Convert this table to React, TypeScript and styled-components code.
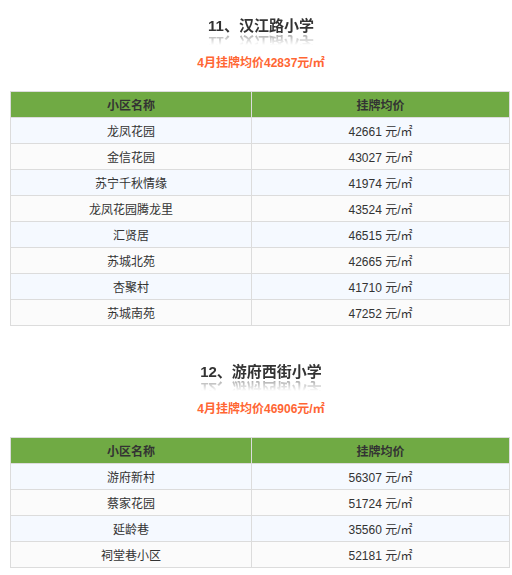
import React from "react";
import styled, { createGlobalStyle } from "styled-components";

const GlobalStyle = createGlobalStyle`
  body {
    margin: 0;
    background: #fff;
    font-family: "Liberation Sans", Arial, "Noto Sans CJK SC", sans-serif;
    color: #333;
  }
`;

type Row = { name: string; price: number };

const schools: { title: string; avg: number; rows: Row[] }[] = [
  {
    title: "11、汉江路小学",
    avg: 42837,
    rows: [
      { name: "龙凤花园", price: 42661 },
      { name: "金信花园", price: 43027 },
      { name: "苏宁千秋情缘", price: 41974 },
      { name: "龙凤花园腾龙里", price: 43524 },
      { name: "汇贤居", price: 46515 },
      { name: "苏城北苑", price: 42665 },
      { name: "杏聚村", price: 41710 },
      { name: "苏城南苑", price: 47252 },
    ],
  },
  {
    title: "12、游府西街小学",
    avg: 46906,
    rows: [
      { name: "游府新村", price: 56307 },
      { name: "蔡家花园", price: 51724 },
      { name: "延龄巷", price: 35560 },
      { name: "祠堂巷小区", price: 52181 },
    ],
  },
];

function App() {
  return (
    <>
      <GlobalStyle />
      <StyledPage>
        {schools.map(({ title, avg, rows }) => (
          <StyledSection key={title}>
            <StyledTitleWrap>
              <StyledTitle>{title}</StyledTitle>
            </StyledTitleWrap>
            <StyledSubTitle>4月挂牌均价{avg}元/㎡</StyledSubTitle>
            <StyledTable>
              <thead>
                <tr>
                  <StyledTh style={{ width: 240 }}>小区名称</StyledTh>
                  <StyledTh>挂牌均价</StyledTh>
                </tr>
              </thead>
              <tbody>
                {rows.map(({ name, price }, i) => (
                  <StyledTr key={name} $odd={i % 2 === 0}>
                    <StyledTd>{name}</StyledTd>
                    <StyledTd>{price} 元/㎡</StyledTd>
                  </StyledTr>
                ))}
              </tbody>
            </StyledTable>
          </StyledSection>
        ))}
      </StyledPage>
    </>
  );
}

export default App;

const StyledPage = styled.div`
  width: 512px;
  padding: 0 2px 0 10px;
  box-sizing: border-box;
`;

const StyledSection = styled.section`
  display: flex;
  flex-direction: column;
  align-items: center;
  padding-top: 16px;
  margin-bottom: 20px;
`;

const StyledTitleWrap = styled.div`
  height: 20px;
  display: flex;
  justify-content: center;
  width: 100%;
  padding-left: 2px;
  box-sizing: border-box;
`;

const StyledTitle = styled.h2`
  margin: 0;
  font-size: 15px;
  line-height: 20px;
  font-weight: bold;
  color: #333;
  -webkit-box-reflect: below -4px
    linear-gradient(transparent 35%, rgba(255, 255, 255, 0.5));
`;

const StyledSubTitle = styled.p`
  margin: 18px 0 0;
  padding-left: 2px;
  font-size: 12px;
  line-height: 18px;
  font-weight: bold;
  color: #ff6633;
`;

const StyledTable = styled.table`
  margin-top: 19px;
  width: 500px;
  border-collapse: collapse;
  table-layout: fixed;
  font-size: 12px;
`;

const StyledTh = styled.th`
  height: 25px;
  padding: 0;
  background: #70aa44;
  border: 1px solid #dcdcdc;
  color: #333;
  font-weight: bold;
  text-align: center;
`;

const StyledTr = styled.tr<{ $odd: boolean }>`
  background: ${({ $odd }) => ($odd ? "#f5f9ff" : "#fbfbfb")};
`;

const StyledTd = styled.td`
  height: 25px;
  padding: 0;
  border: 1px solid #dcdcdc;
  color: #333;
  text-align: center;
`;
